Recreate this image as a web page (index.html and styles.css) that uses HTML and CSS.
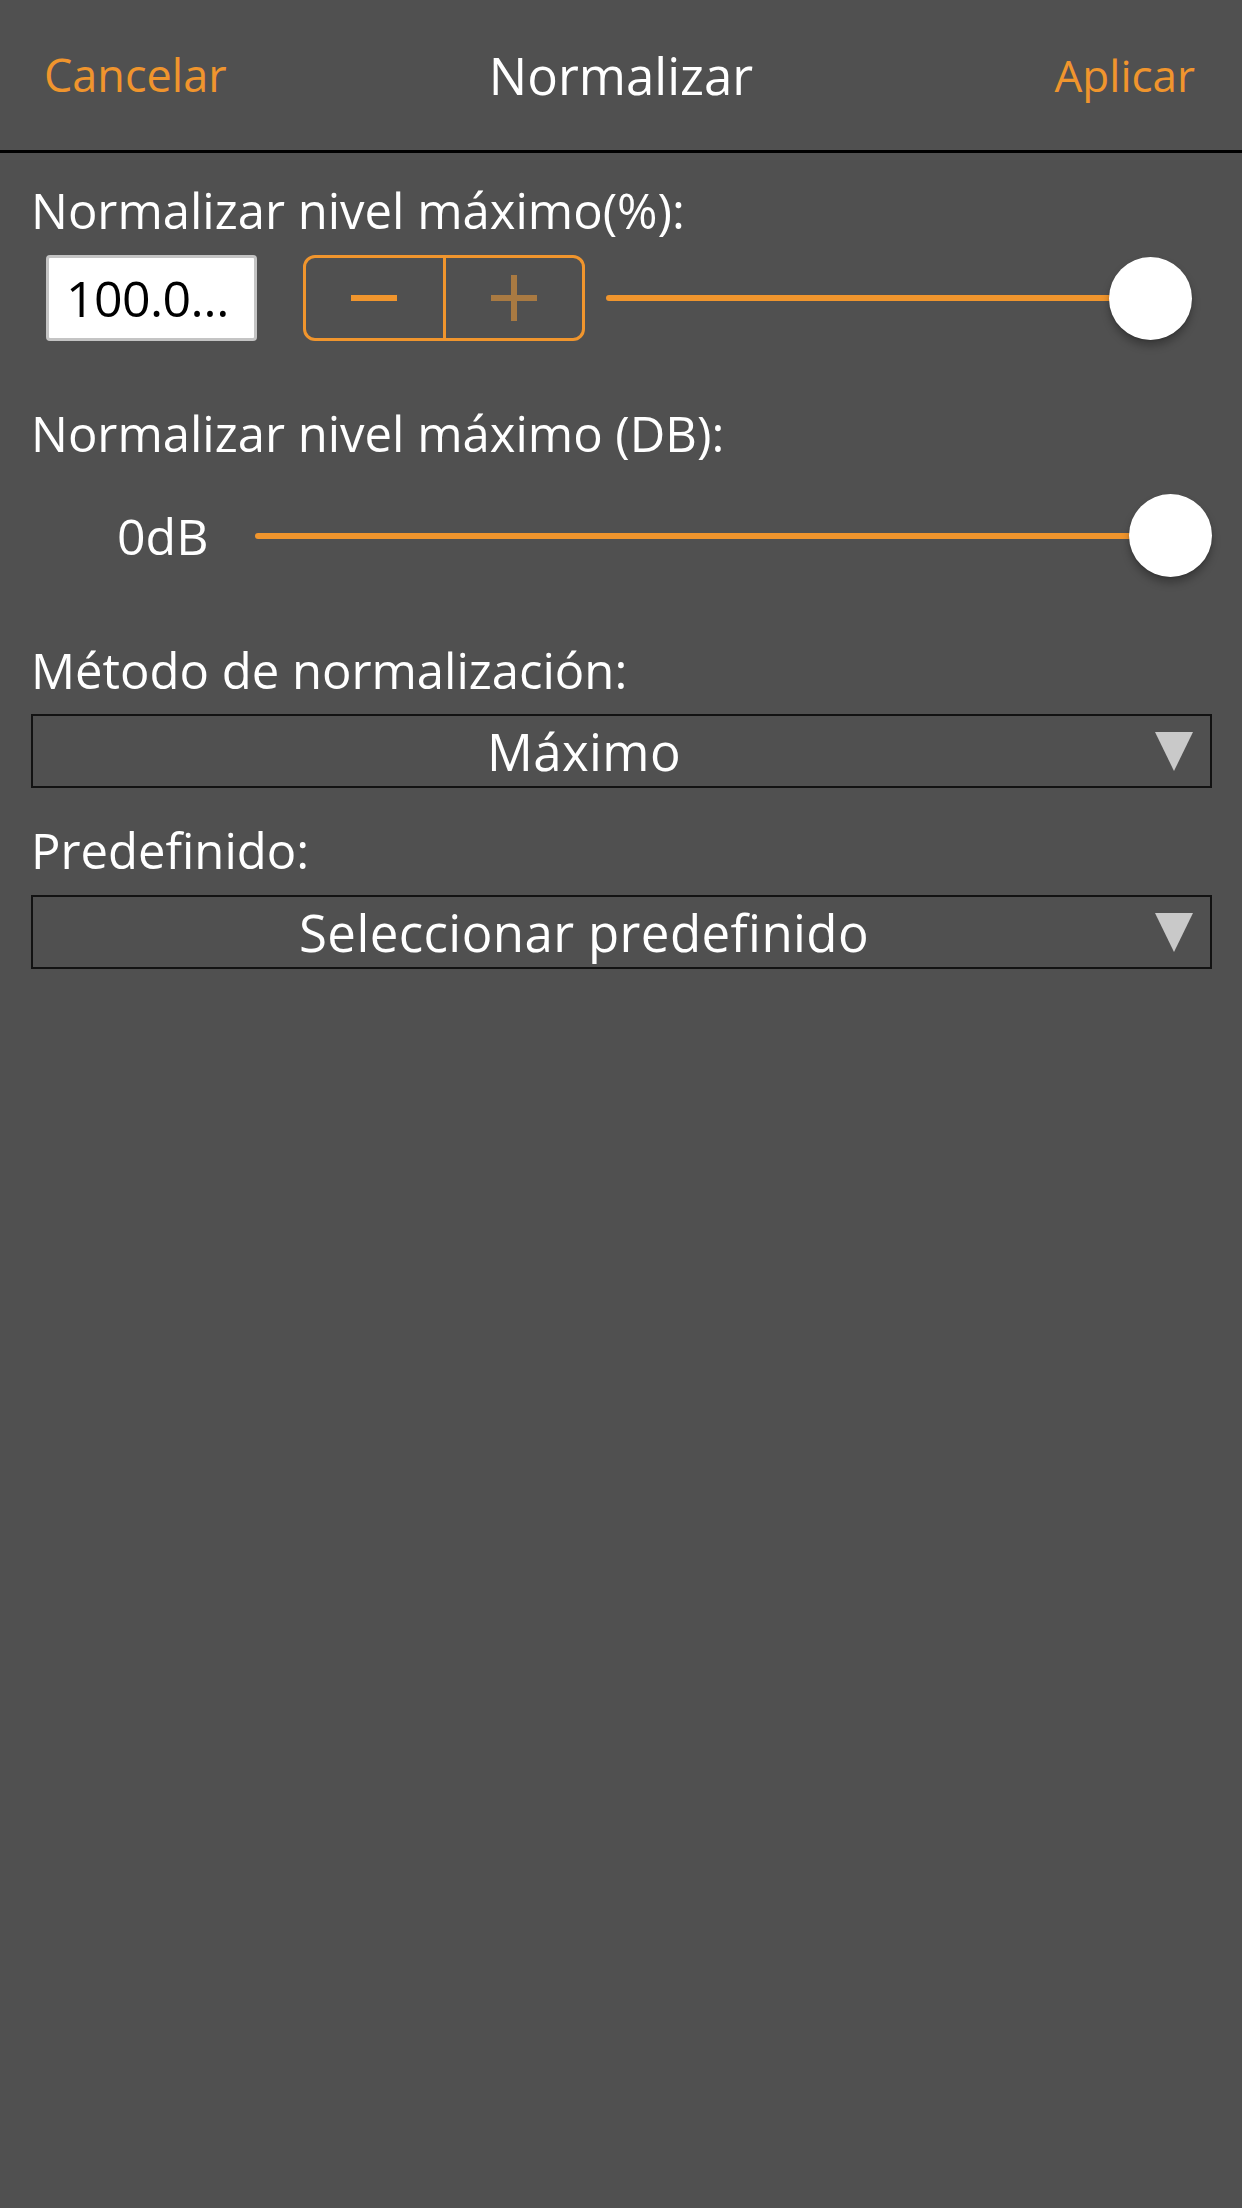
FILE: index.html
```html
<!DOCTYPE html>
<html lang="es">
<head>
<meta charset="utf-8">
<title>Normalizar</title>
<link rel="stylesheet" href="styles.css">
</head>
<body>
<div class="screen">
  <header class="navbar">
    <span class="nav-btn">Cancelar</span>
    <span class="nav-title">Normalizar</span>
    <span class="nav-btn">Aplicar</span>
  </header>
  <main class="content">
    <div class="label label-1">Normalizar nivel máximo(%):</div>
    <div class="row row-percent">
      <div class="textbox">100.0…</div>
      <div class="stepper">
        <div class="step step-minus"><span class="minus"></span></div>
        <div class="step step-plus"><span class="plus"></span></div>
      </div>
      <div class="slider slider-1">
        <div class="track"></div>
        <div class="thumb"></div>
      </div>
    </div>

    <div class="label label-2">Normalizar nivel máximo (DB):</div>
    <div class="row row-db">
      <div class="db-value">0dB</div>
      <div class="slider slider-2">
        <div class="track"></div>
        <div class="thumb"></div>
      </div>
    </div>

    <div class="label label-3">Método de normalización:</div>
    <div class="dropdown dropdown-1">
      <span class="dropdown-text">Máximo</span>
      <svg class="arrow" width="38" height="39" viewBox="0 0 38 39"><polygon points="0,0 38,0 19,39" fill="#c9c9c9"/></svg>
    </div>

    <div class="label label-4">Predefinido:</div>
    <div class="dropdown dropdown-2">
      <span class="dropdown-text">Seleccionar predefinido</span>
      <svg class="arrow" width="38" height="39" viewBox="0 0 38 39"><polygon points="0,0 38,0 19,39" fill="#c9c9c9"/></svg>
    </div>
  </main>
</div>
</body>
</html>
```

FILE: styles.css
```css
html, body {
  margin: 0;
  padding: 0;
  background: #505050;
}

body {
  font-family: "Open Sans", "Liberation Sans", sans-serif;
  color: #ffffff;
}

.screen {
  width: 1242px;
  height: 2208px;
  background: #505050;
  overflow: hidden;
}

/* Navigation bar */
.navbar {
  height: 150px;
  border-bottom: 3px solid #000000;
  display: flex;
  align-items: center;
  justify-content: space-between;
  padding: 0 47px 0 44px;
  position: relative;
}

.nav-btn {
  font-size: 44px;
  line-height: 60px;
  color: #f0952d;
}

.nav-btn:first-child {
  font-size: 45px;
}

.nav-title {
  position: absolute;
  left: 0;
  right: 0;
  text-align: center;
  font-size: 51px;
  line-height: 60px;
  color: #ffffff;
  pointer-events: none;
}

/* Content */
.content {
  display: flex;
  flex-direction: column;
  padding: 0 30px 0 31px;
}

.label {
  font-size: 49px;
  line-height: 60px;
  height: 60px;
  color: #ffffff;
  white-space: nowrap;
}

.label-1 { margin-top: 27px; }
.label-2 { margin-top: 62px; }
.label-3 { margin-top: 63px; }
.label-4 { margin-top: 32px; }

.row {
  display: flex;
  align-items: center;
}

.row-percent {
  margin-top: 15px;
  height: 86px;
  padding-left: 15px;
  padding-right: 20px;
}

.textbox {
  position: relative;
  box-sizing: border-box;
  width: 211px;
  height: 86px;
  background: #ffffff;
  border: 3px solid #c4c4c4;
  border-radius: 4px;
  color: #000000;
  font-size: 50px;
  letter-spacing: -0.6px;
  line-height: 80px;
  padding-left: 17px;
  white-space: nowrap;
  overflow: hidden;
}

.stepper {
  box-sizing: border-box;
  margin-left: 46px;
  width: 282px;
  height: 86px;
  border: 3px solid #f0952d;
  border-radius: 12px;
  display: flex;
}

.step {
  flex: 1;
  display: flex;
  align-items: center;
  justify-content: center;
}

.step-plus {
  border-left: 3px solid #f0952d;
}

.minus {
  display: block;
  width: 46px;
  height: 6px;
  background: #f0952d;
}

.plus {
  display: block;
  width: 46px;
  height: 46px;
  background:
    linear-gradient(#a97a42, #a97a42) center / 46px 6px no-repeat,
    linear-gradient(#a97a42, #a97a42) center / 6px 46px no-repeat;
}

.slider {
  flex: 1;
  display: flex;
  align-items: center;
  height: 83px;
}

.slider-1 {
  margin-left: 21px;
}

.track {
  flex: 1;
  height: 6px;
  border-radius: 3px;
  background: #f0952d;
  margin-right: -42px;
}

.thumb {
  position: relative;
  width: 83px;
  height: 83px;
  border-radius: 50%;
  background: #ffffff;
  box-shadow: 0 6px 8px rgba(0, 0, 0, 0.28), 0 1px 2px rgba(0, 0, 0, 0.15);
}

.row-db {
  margin-top: 31px;
  height: 83px;
  padding-left: 86px;
}

.db-value {
  font-size: 50px;
  line-height: 60px;
  color: #ffffff;
  width: 138px;
}

/* Dropdowns */
.dropdown {
  box-sizing: border-box;
  height: 74px;
  border: 2px solid #121212;
  display: flex;
  align-items: center;
}

.dropdown-1 { margin-top: 14px; }
.dropdown-2 { margin-top: 15px; }

.dropdown-text {
  flex: 1;
  text-align: center;
  font-size: 51px;
  letter-spacing: 0.4px;
  line-height: 60px;
  color: #ffffff;
  white-space: nowrap;
}

.arrow {
  flex: none;
  margin: 0 17px 0 20px;
  display: block;
}
```
